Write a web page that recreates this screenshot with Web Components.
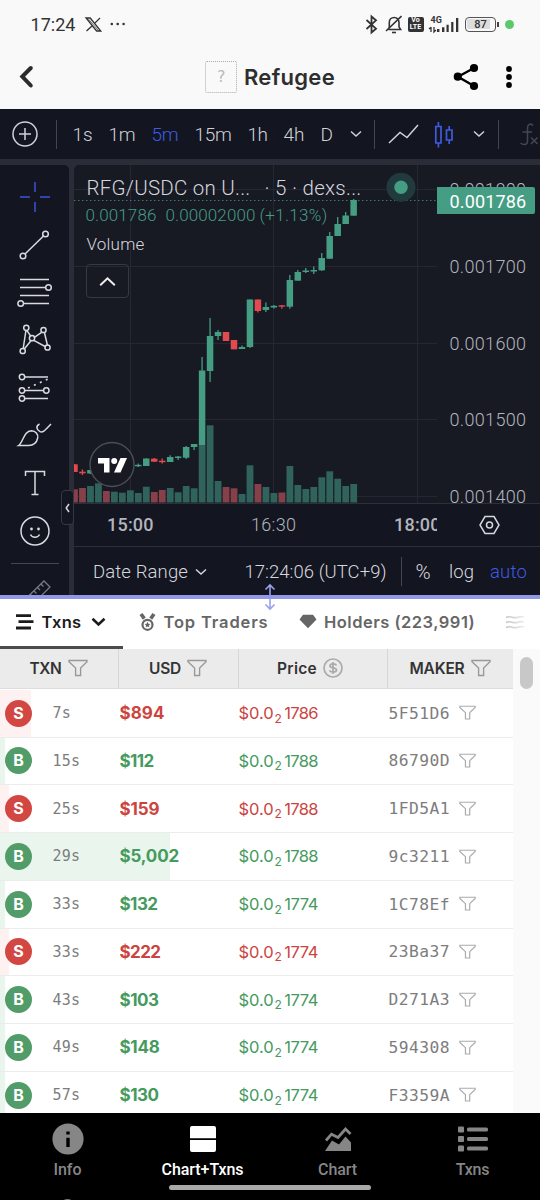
<!DOCTYPE html>
<html lang="en">
<head>
<meta charset="utf-8">
<meta name="viewport" content="width=device-width">
<title>Refugee</title>
<style>
  html, body { margin: 0; height: 100%; overflow: hidden; background: #000; }
  body { font-family: Roboto, "Liberation Sans", sans-serif; }
</style>
</head>
<body>
<token-screen></token-screen>

<script>
// Shared shadow root setup
class BaseElement extends HTMLElement {
  constructor() {
    super();
    this.attachShadow({ mode: "open" });
    this.shadowRoot.innerHTML = `<style>${this.styles()}</style>${this.render()}`;
  }
  styles() { return ":host { display: block; }"; }
  render() { return "<slot></slot>"; }
}

// name: [width, height, markup]
const ICONS = {
  x: [17, 15, `<path d="M1 1H5.2L15.8 14H11.6Z M15 1 9.3 6.6 M7.3 8.8 1.5 14" stroke-width="1.3"/><path d="M3 1.6 13.5 13.6" stroke-width=".7"/>`],
  more: [16, 4, `<g fill="currentColor" stroke="none"><circle cx="1.8" cy="2" r="1.3"/><circle cx="7.7" cy="2" r="1.3"/><circle cx="13.6" cy="2" r="1.3"/></g>`],
  bluetooth: [14, 19, `<path d="M1.5 5 11 13.7 6.5 17.5V1.5L11 5.3 1.5 14" stroke-width="1.8"/>`],
  mute: [18, 19, `<path d="M3.5 14.5H15.6L14 11.8V7.5C14 4.4 12 2.5 9.2 2.5 6.3 2.5 4.3 4.4 4.3 7.5V12L3 14.5 M1 16 16.5 1.2" stroke-width="1.6"/><path d="M7 17.5H11" stroke-width="1.6"/>`],
  signal: [22, 14, `<g fill="currentColor" stroke="none"><path d="M0 11h2.4v3H0zM5 9.2h2.4V14H5zM9.500 6.8h2.200V14H9.500zM14.200 4h2.200v10h-2.200zM19 0h2.300v14H19z"/></g>`],
  arrows: [7, 5, `<path d="M2 0V5M0 2 2 .3M5 0V5L7 3" stroke-width="1.3"/>`],
  back: [16, 24, `<path d="M12.8 3 4.3 11.5 12.8 20.5" stroke-width="4" stroke-linecap="round"/>`],
  share: [26, 28, `<path d="M21 5 5 13.7 21 23" stroke-width="2.4"/><g fill="currentColor" stroke="none"><circle cx="21" cy="5" r="4.1"/><circle cx="4.8" cy="13.7" r="4.1"/><circle cx="21" cy="23" r="4.1"/></g>`],
  kebab: [6, 24, `<g fill="currentColor" stroke="none"><circle cx="3" cy="4" r="2.9"/><circle cx="3" cy="12" r="2.9"/><circle cx="3" cy="20" r="2.9"/></g>`],
  plus: [26, 26, `<circle cx="13" cy="13" r="12"/><path d="M13 7V19M7 13H19"/>`],
  down: [12, 8, `<path d="M1 1.5 6 6 11 1.5" stroke-width="1.5"/>`],
  up: [17, 11, `<path d="M1.2 9.3 8.5 2.3 15.8 9.3" stroke-width="2"/>`],
  line: [31, 22, `<path d="M1 20 12 9.5 19 14.5 30 2"/>`],
  candles: [20, 27, `<path d="M1.8 5.5H7V22H1.8ZM4.4 1V5.5M4.4 22V26.5M12.5 9H18V19H12.5ZM15.2 5V9M15.2 19V23" stroke-width="1.7"/>`],
  fx: [22, 24, `<path d="M14 3.500C11.500 .8 8.500 2.500 8.500 6V19C8.500 23 4.500 23.500 1.500 21M3.500 10H13M12 15.500 18.500 22M18.500 15.500 12 22"/>`],
  cross: [32, 32, `<path d="M16 1V11M16 21V31M1 16H11M21 16H31" stroke-width="1.5"/>`],
  trend: [32, 32, `<path d="M6 25 24.5 7"/><circle cx="4" cy="27" r="2.8"/><circle cx="26.5" cy="5" r="2.8"/>`],
  fib: [36, 32, `<path d="M3 3.5H32M3 11.5H29M3 19.5H32M6.5 27.5H32"/><circle cx="31.5" cy="11.5" r="2.8"/><circle cx="3.7" cy="27.5" r="2.8"/>`],
  pattern: [32, 32, `<path d="M7 6 4.2 24.5M7.8 6.3 12 12.5M5.5 24.8 12.5 16M15 13.7 23 8.2M25.3 8 28.5 21.5M14.8 16.3 27 23"/><circle cx="7.3" cy="3.8" r="2.6"/><circle cx="24.5" cy="6" r="2.6"/><circle cx="13" cy="14.2" r="2.6"/><circle cx="3.7" cy="27" r="2.6"/><circle cx="28.5" cy="23.5" r="2.6"/>`],
  forecast: [32, 32, `<path d="M5.7 5H29M5.7 18.5H24.7M5.7 26.5H29"/><circle cx="3" cy="5" r="2.7"/><circle cx="3" cy="18.5" r="2.7"/><circle cx="27.3" cy="18.5" r="2.7"/><circle cx="3" cy="26.5" r="2.7"/><path d="M9 16 29 7" stroke-dasharray="2 4.5" stroke-width="1.7"/>`],
  brush: [36, 28, `<path d="M1.5 24.5C6.500 21 6.500 10 14.500 9.700 18.500 10 21.500 13 20.700 17 19.500 22.500 16 24.500 11.500 24.500Z M22.500 3C18.500 5 19.500 9 23 10.700 25.500 12 27 10.500 34 3"/>`],
  text: [24, 28, `<path d="M2.500 7V2.500H21.500V7M12 2.500V25.500M8.500 25.500H15.500"/>`],
  smile: [32, 32, `<circle cx="16" cy="16" r="14"/><path d="M11.500 19.500C13 23 19 23 20.500 19.500"/><g fill="currentColor" stroke="none"><circle cx="12.500" cy="14" r="1.400"/><circle cx="19.500" cy="14" r="1.400"/></g>`],
  ruler: [26, 26, `<path d="M1 18.500 18 2 24 8 7 25ZM4.500 15.500 7 18M8 12 10.500 14.500M11.500 8.500 14 11M15 5 17.500 7.500" stroke-width="1.300"/>`],
  gear: [21, 20, `<path d="M6 1.500H15L20 10 15 18.500H6L1 10Z"/><circle cx="10.500" cy="10" r="3"/>`],
  collapse: [5, 10, `<path d="M4 1 1.200 5 4 9"/>`],
  txns: [18, 16, `<path d="M0 1.700H15M2.500 7.700H17.500M0 14H15" stroke-width="2.800"/>`],
  caret: [15, 10, `<path d="M1.500 1.800 7.500 7.500 13.500 1.800" stroke-width="2.600"/>`],
  medal: [17, 18, `<circle cx="8.500" cy="11.800" r="5" stroke-width="2.200"/><path d="M2 1 5.300 5.600M15 1 11.700 5.600" stroke-width="3.600"/><path d="M8.500 8.800l.9 1.900 2 .2-1.400 1.400.3 2-1.800-.9-1.800.9.3-2-1.400-1.400 2-.2z" fill="currentColor" stroke="none"/>`],
  diamond: [18, 15, `<path d="M4 .8H14L17.500 5.500 9 14.300.500 5.500Z" fill="currentColor" stroke="none"/>`],
  waves: [19, 14, `<path d="M0 2.500Q3 1.200 6 2.200T12 2.200 18 2M0 7.500Q3 6.200 6 7.200T12 7.200 18 7M0 12.500Q3 11.200 6 12.200T12 12.200 18 12" stroke-width="1.700"/>`],
  funnel: [20, 18, `<path d="M1 1.500H19V2.800L12.600 9V16.500H7.600V9L1 2.800Z" stroke-width="1.400"/>`],
  dollar: [20, 20, `<circle cx="10" cy="10" r="9" stroke-width="1.700"/><path d="M13.500 7.500C12.500 5.300 7 5.300 7 7.900 7 10.500 13.500 9.300 13.500 12 13.500 14.700 7.500 14.500 6.500 12.300M10 4V16" stroke-width="1.700"/>`],
  resize: [12, 28, `<path d="M6 12V2M1.500 6.500 6 2 10.500 6.500M6 16V26M1.500 21.500 6 26 10.500 21.500" stroke-width="1.600"/>`],
  info: [32, 32, `<circle cx="16" cy="16" r="15.600" fill="currentColor" stroke="none"/><path d="M14.300 14.700H17.700V24H14.300ZM14.300 8.500H17.700V11.500H14.300Z" fill="#000" stroke="none"/>`],
  split: [26, 26, `<path d="M2 0H24Q26 0 26 2V12.300H0V2Q0 0 2 0ZM0 13.900H26V24Q26 26 24 26H2Q0 26 0 24Z" fill="currentColor" stroke="none"/>`],
  area: [26, 26, `<path d="M0 25 7 14.500 14 18.500 20.500 10.500 26 16.500V25Z" fill="currentColor" stroke="none"/><path d="M1 14.500 6.500 8.200 13 11.500 20.500 3 25.500 8" stroke-width="2.800"/>`],
  list: [30, 26, `<g fill="currentColor" stroke="none"><rect width="6" height="6" rx="1" y=".5"/><rect width="6" height="6" rx="1" y="10"/><rect width="6" height="6" rx="1" y="19.500"/><rect x="9" y="1.500" width="21" height="4" rx="1.500"/><rect x="9" y="11" width="21" height="4" rx="1.500"/><rect x="9" y="20.500" width="21" height="4" rx="1.500"/></g>`],
};

class AppIcon extends BaseElement {
  styles() {
    return `:host { display: block; flex: none; line-height: 0; }
      svg { display: block; overflow: visible; fill: none; stroke: currentColor; stroke-width: 1.5; }`;
  }
  render() {
    const [w, h, body] = ICONS[this.getAttribute("name")];
    const scale = Number(this.getAttribute("scale")) || 1;
    return `<svg width="${w * scale}" height="${h * scale}" viewBox="0 0 ${w} ${h}">${body}</svg>`;
  }
}

class StatusBar extends BaseElement {
  styles() {
    return `:host { display: flex; align-items: center; height: 48px; color: #333; box-sizing: border-box; padding: 0 26.5px 0 30.5px; }
      .time { font-size: 18px; }
      .push { margin-left: auto; }
      .volte { width: 16px; height: 15px; margin-left: 5px; border-radius: 2px; background: #333; color: #fff; font: 700 7px/7px Roboto, sans-serif; text-align: center; }
      .net { display: flex; align-items: flex-end; height: 15px; margin-left: 5px; position: relative; }
      .net span { position: absolute; left: 2px; top: -1px; font: 700 9px/9px Roboto, sans-serif; }
      .net app-icon + app-icon { margin-left: 1.5px; }
      .battery { box-sizing: border-box; width: 31px; height: 15px; margin-left: 6px; border: 1.5px solid #555; border-radius: 4px; padding: 1px; }
      .battery b { display: block; height: 10px; font: 500 11px/11px Roboto, sans-serif; text-align: center; border-radius: 2px; background: linear-gradient(90deg, #ddd 87%, transparent 87%); }
      .tip { width: 2px; height: 5px; margin-left: 1px; background: #444; }
      .live { width: 9px; height: 9px; margin-left: 5.5px; border-radius: 50%; background: #5bc96b; }`;
  }
  render() {
    return `<fit-text class="time" width="45">17:24</fit-text>
      <app-icon name="x" style="margin-left:9px"></app-icon>
      <app-icon name="more" style="margin-left:8px"></app-icon>
      <app-icon class="push" name="bluetooth"></app-icon>
      <app-icon name="mute" style="margin-left:6px"></app-icon>
      <div class="volte">Vo<br>LTE</div>
      <div class="net"><span>4G</span><app-icon name="arrows"></app-icon><app-icon name="signal"></app-icon></div>
      <div class="battery"><b>87</b></div><div class="tip"></div><div class="live"></div>`;
  }
}

class TokenHeader extends BaseElement {
  styles() {
    return `:host { display: flex; align-items: center; height: 61px; padding: 0 0 4px 18px; box-sizing: border-box; color: #000; }
      .back { color: #2c2c2c; margin-right: 171px; }
      .logo { box-sizing: border-box; width: 32px; height: 32px; border: 1.5px dotted #aaa; border-radius: 2px; color: #bbb; font: 16px/30px "DejaVu Sans Mono", monospace; text-align: center; }
      .name { margin-left: 7px; font: 600 22px Inter, sans-serif; color: #2e2e2e; }
      .share { margin-left: 117.5px; }
      .menu { margin-left: 27.5px; }`;
  }
  render() {
    return `<app-icon class="back" name="back"></app-icon>
      <div class="logo">?</div><fit-text class="name" width="91">Refugee</fit-text>
      <app-icon class="share" name="share"></app-icon><app-icon class="menu" name="kebab"></app-icon>`;
  }
}

class ChartToolbar extends BaseElement {
  styles() {
    return `:host { display: flex; align-items: center; height: 50px; padding-left: 11.5px; background: #131520; color: #d0d2d9; font-size: 19px; font-weight: 300; overflow: hidden; }
      fit-text { margin-left: 16px; }
      i { flex: none; width: 1px; height: 29px; background: #434651; }
      .on { color: #3f5be0; }
      .fx { color: #444752; margin-left: 20px; }`;
  }
  render() {
    return `<app-icon name="plus"></app-icon><i style="margin-left:18px"></i>
      <fit-text width="20">1s</fit-text><fit-text width="27">1m</fit-text>
      <fit-text class="on" width="27">5m</fit-text><fit-text width="37">15m</fit-text>
      <fit-text width="20">1h</fit-text><fit-text width="21">4h</fit-text><fit-text width="12">D</fit-text>
      <app-icon name="down" style="margin-left:17.500px"></app-icon><i style="margin-left:12px"></i>
      <app-icon name="line" style="margin-left:13px"></app-icon>
      <app-icon class="on" name="candles" style="margin-left:15px"></app-icon>
      <app-icon name="down" style="margin-left:19px"></app-icon><i style="margin-left:13px"></i>
      <app-icon class="fx" name="fx"></app-icon>`;
  }
}

class DrawTools extends BaseElement {
  styles() {
    return `:host { position: relative; display: flex; flex-direction: column; align-items: center; width: 69px; height: 431px; box-sizing: border-box; padding-top: 8px; background: #131520; border-radius: 0 5px 0 0; color: #d8dae0; overflow: hidden; }
      div { flex: none; display: grid; place-items: center; height: 47.7px; }
      .cross { color: #3a55d9; }
      hr { flex: none; width: 48px; height: 1px; margin: 8px 0 15px; border: 0; background: #434651; }
      .ruler { color: #777a84; margin-left: 9px; }`;
  }
  render() {
    const tools = ["cross", "trend", "fib", "pattern", "forecast", "brush", "text", "smile"];
    return tools.map((t) => `<div class="${t}"><app-icon name="${t}"></app-icon></div>`).join("") +
      `<hr><app-icon class="ruler" name="ruler"></app-icon>`;
  }
}

// [colour, body top, body bottom, wick top, wick bottom, volume top]
const CANDLES = [
  ["r", 464.3, 472, 464, 472, 489.3], ["r", 471.7, 473.3, 469.5, 475, 488],
  ["g", 470, 473.5, 470, 474, 486], ["g", 466, 470, 465, 471, 483.3],
  ["r", 466, 469, 465, 470, 491], ["g", 465, 469, 464, 470, 491.7],
  ["g", 464, 467, 463, 468, 492.7], ["g", 464, 467, 463, 468, 490.3],
  ["g", 464.8, 466.3, 463.5, 467, 493], ["g", 458.5, 466, 458.5, 466, 486.7],
  ["r", 458.7, 461.7, 458, 462, 492], ["r", 460.7, 462.2, 458.5, 463.5, 490],
  ["g", 457, 462, 455.3, 462, 488], ["g", 456.5, 458, 456, 460, 492.3],
  ["g", 447, 457.7, 446, 459, 486], ["g", 444, 447, 444, 450, 488.3],
  ["g", 370.5, 445, 357, 445, 445], ["g", 336, 371, 318, 382, 425.3],
  ["g", 332, 336, 330, 340, 481], ["r", 332, 341, 332, 341, 487],
  ["r", 340, 349.3, 340, 349.3, 488.3], ["g", 347, 349, 345.5, 349, 494],
  ["g", 299.5, 347, 299.5, 348, 465.3], ["r", 299.5, 311, 299.5, 312.5, 484],
  ["g", 307, 310, 302.5, 312, 487], ["g", 305.8, 307.5, 305, 308.5, 493],
  ["r", 305.3, 306.7, 305, 308.7, 492.5], ["g", 280, 306.7, 275, 308.7, 466],
  ["g", 272, 280.7, 270, 280.7, 485], ["g", 270.5, 272, 268, 273, 489],
  ["g", 270, 271.5, 266.5, 274, 487], ["g", 258, 270.3, 253, 271, 477.3],
  ["g", 236, 258.7, 232, 259, 471.3], ["g", 224, 236, 217, 236, 478.7],
  ["g", 215.5, 224, 212, 224, 486], ["g", 200, 215.7, 199, 215.7, 484],
];
const FILL = { g: "#459d84", r: "#e24a4f" };
const VOLUME = { g: "#30635c", r: "#86404a" };

class PriceChart extends BaseElement {
  styles() {
    return `:host { position: relative; display: block; height: 382px; background: #171923; border-radius: 5px 0 0 0; overflow: hidden; color: #d5d7de; }
      svg { display: block; font-family: Roboto, sans-serif; }
      .legend { position: absolute; left: 12.5px; top: 12px; display: flex; flex-direction: column; align-items: flex-start; font-weight: 300; }
      .title { display: flex; gap: 14px; font-size: 20.5px; line-height: 22px; }
      .values { display: flex; gap: 9px; margin-left: -1px; font-size: 17px; line-height: 20px; margin-top: 6px; color: #459d84; }
      .values fit-text + fit-text + fit-text { margin-left: -5px; }
      .study { margin-top: 9px; font-size: 17px; line-height: 20px; }
      .toggle { box-sizing: border-box; width: 43px; height: 34px; margin: 10px 0 0 -.5px; display: grid; place-items: center; border: 1.5px solid #363943; border-radius: 4px; color: #eee; }
      .gear { position: absolute; left: 405px; top: 350px; }`;
  }
  render() {
    const candles = CANDLES.map(([c, top, bottom, high, low, vol], i) => {
      const x = 74.4 + i * 7.977;
      return `<rect x="${x - 3.3}" y="${vol}" width="6.8" height="${502.5 - vol}" fill="${VOLUME[c]}"/>
        <rect x="${x - 0.6}" y="${high}" width="1.3" height="${low - high}" fill="${FILL[c]}"/>
        <rect x="${x - 3.2}" y="${top}" width="6.5" height="${bottom - top}" fill="${FILL[c]}"/>`;
    }).join("");
    const label = (y, text) => `<text x="449.5" y="${y}" textLength="76.500">${text}</text>`;
    return `<svg width="466" height="382" viewBox="74 165 466 382">
      <rect x="74" y="503.500" width="466" height="43.500" fill="#131520"/>
      <path d="M130.500 165V503M273.500 165V503M417.500 165V503M74 189.500H437M74 266.500H437M74 343.500H437M74 419.500H437M74 496.500H437" stroke="#252832"/>
      ${candles}
      <path d="M74 503.500H540M74 546.500H540" stroke="#2d303b"/>
      <path d="M74 200.500H437" stroke="#459d84" stroke-dasharray="1.500 2.500" opacity=".75"/>
      <g fill="#b3b5be" font-size="18" font-weight="300">
        ${label(195.5, "0.001800")}${label(273, "0.001700")}${label(350, "0.001600")}${label(426.300, "0.001500")}
        <svg x="437" y="480" width="103" height="23" viewBox="437 480 103 23">${label(503.300, "0.001400")}</svg>
        <svg x="74" y="505" width="363" height="40" viewBox="74 505 363 40">
          <text x="107" y="530.500" textLength="46.500" font-weight="500">15:00</text>
          <text x="251" y="530.500" textLength="45">16:30</text>
          <text x="394" y="530.500" textLength="46.500" font-weight="500">18:00</text>
        </svg>
      </g>
      <path d="M437 187H533Q535 187 535 189V212Q535 214 533 214H437Z" fill="#459d84"/>
      <text x="449.500" y="207.500" textLength="76.500" font-size="18" fill="#fff">0.001786</text>
      <circle cx="401" cy="187.300" r="14.500" fill="#203a3d"/><circle cx="401" cy="187.300" r="6.700" fill="#459d84"/>
      <circle cx="112" cy="464.500" r="22" fill="#171923" stroke="#4a4c55" stroke-width="1.500"/>
      <g fill="#fff"><path d="M98 458H109.500V472.500H104V463.500H98Z"/><circle cx="114.200" cy="461" r="3"/><path d="M120.500 458H127L120.500 472.500H114Z"/></g>
    </svg>
    <div class="legend">
      <div class="title"><fit-text width="164">RFG/USDC on U...</fit-text><fit-text width="97">· 5 · dexs...</fit-text></div>
      <div class="values"><fit-text width="71">0.001786</fit-text><fit-text width="90">0.00002000</fit-text><fit-text width="68">(+1.13%)</fit-text></div>
      <fit-text class="study" width="58">Volume</fit-text>
      <div class="toggle"><app-icon name="up"></app-icon></div>
    </div>
    <app-icon class="gear" name="gear"></app-icon>`;
  }
}

class ChartFooter extends BaseElement {
  styles() {
    return `:host { display: flex; align-items: center; height: 49px; padding-left: 19px; background: #131520; color: #d5d7de; font-size: 18.5px; font-weight: 300; }
      i { width: 1px; height: 29px; margin-left: 14px; background: #434651; }
      .percent { font-size: 20.5px; }
      .auto { color: #3f5be0; }`;
  }
  render() {
    return `<fit-text width="95">Date Range</fit-text><app-icon name="down" style="margin-left:6.500px"></app-icon>
      <fit-text width="142" style="margin-left:38px">17:24:06 (UTC+9)</fit-text><i></i>
      <fit-text class="percent" width="18" style="margin-left:14px">%</fit-text><fit-text width="25" style="margin-left:15.500px">log</fit-text>
      <fit-text class="auto" width="37" style="margin-left:16px">auto</fit-text>`;
  }
}

class PanelTabs extends BaseElement {
  styles() {
    return `:host { display: flex; height: 50px; background: #fff; color: #666; font: 600 16.5px Inter, sans-serif; }
      div { display: flex; align-items: center; box-sizing: border-box; padding-bottom: 5px; }
      .on { width: 123px; padding: 0 0 2px 16px; border-bottom: 3px solid #4c4c4c; color: #1c1c1c; }
      .fade app-icon { -webkit-mask: linear-gradient(90deg, #000, rgba(0, 0, 0, .25)); mask: linear-gradient(90deg, #000, rgba(0, 0, 0, .25)); color: #c4c4c4; }`;
  }
  render() {
    return `<div class="on"><app-icon name="txns"></app-icon><fit-text width="40" style="margin-left:7.500px">Txns</fit-text><app-icon name="caret" style="margin-left:9px"></app-icon></div>
      <div style="margin-left:15.500px"><app-icon name="medal"></app-icon><fit-text width="105" style="margin-left:8px">Top Traders</fit-text></div>
      <div style="margin-left:30.500px"><app-icon name="diamond"></app-icon><fit-text width="151" style="margin-left:7px">Holders (223,991)</fit-text></div>
      <div class="fade" style="margin-left:31px"><app-icon name="waves"></app-icon></div>`;
  }
}

class TxnRow extends BaseElement {
  styles() {
    const sell = this.getAttribute("side") === "S";
    return `:host { display: grid; grid-template-columns: 52.5px 67px 119px 150px 1fr; align-items: center; height: 47.75px; box-sizing: border-box; border-bottom: 1px solid #ececec; color: ${sell ? "#cc4440" : "#459a5d"};
        background: linear-gradient(${sell ? "#fdf1f1, #fdf1f1" : "#eaf6ed, #eaf6ed"}) 0 0 / ${this.getAttribute("bar")}px 100% no-repeat #fff; }
      .side { width: 27px; height: 27px; margin-left: 5px; border-radius: 50%; background: ${sell ? "#d34742" : "#519c69"}; color: #fff; font: 700 16px/27px Inter, sans-serif; text-align: center; }
      .age, .maker { color: #7d7d7d; font: 15px "DejaVu Sans Mono", monospace; }
      .usd { font: 700 17px Inter, sans-serif; }
      .price { display: flex; align-items: baseline; font: 400 16.5px Inter, sans-serif; }
      .price small { font-size: 12px; position: relative; top: 3.5px; margin: 0 2.5px 0 1px; }
      .maker { display: flex; align-items: center; font-size: 16.3px; }
      app-icon { margin-left: 9px; color: #aaa; }`;
  }
  render() {
    const get = (name) => this.getAttribute(name);
    return `<div class="side">${get("side")}</div>
      <fit-text class="age" width="${get("age").length * 9.2}">${get("age")}</fit-text>
      <fit-text class="usd" width="${get("w")}">${get("usd")}</fit-text>
      <div class="price"><fit-text width="35">$0.0</fit-text><small>2</small><fit-text width="33.500">${get("price")}</fit-text></div>
      <div class="maker"><fit-text width="61.5">${get("maker")}</fit-text><app-icon name="funnel" scale=".85"></app-icon></div>`;
  }
}

// side, age, usd, usd width, price digits, maker, bar width
const TXNS = [
  ["S", "7s", "$894", 45, "1786", "5F51D6", 31],
  ["B", "15s", "$112", 34, "1788", "86790D", 5],
  ["S", "25s", "$159", 40, "1788", "1FD5A1", 9],
  ["B", "29s", "$5,002", 59.5, "1788", "9c3211", 170],
  ["B", "33s", "$132", 38, "1774", "1C78Ef", 5],
  ["S", "33s", "$222", 41, "1774", "23Ba37", 9],
  ["B", "43s", "$103", 39, "1774", "D271A3", 5],
  ["B", "49s", "$148", 40, "1774", "594308", 5],
  ["B", "57s", "$130", 39, "1774", "F3359A", 5],
];

class TxnTable extends BaseElement {
  styles() {
    return `:host { display: grid; grid-template-columns: 513px 27px; height: 464px; overflow: hidden; background: #fff; }
      header { display: grid; grid-template-columns: 119px 120px 149px 125px; height: 40px; background: #ebebeb; color: #333; font: 600 15.5px Inter, sans-serif; border-bottom: 1px solid #ddd; box-sizing: border-box; }
      header div { display: flex; align-items: center; justify-content: center; gap: 6px; box-sizing: border-box; border-right: 1px solid #d6d6d6; padding: 0 1px 1px 0; }
      header div:nth-child(3) { padding-right: 6px; }
      header div:last-child { border: 0; }
      header + * { margin-top: .75px; }
      app-icon { color: #999; }
      header div:nth-child(3) app-icon { color: #aaa; }
      aside { background: #fafafa; padding: 8px 7px; }
      aside span { display: block; width: 13px; height: 32px; border-radius: 7px; background: #c8c8c8; }`;
  }
  render() {
    const rows = TXNS.map(([side, age, usd, w, price, maker, bar]) =>
      `<txn-row side="${side}" age="${age}" usd="${usd}" w="${w}" price="${price}" maker="${maker}" bar="${bar}"></txn-row>`).join("");
    return `<section><header>
        <div><fit-text width="32">TXN</fit-text><app-icon name="funnel"></app-icon></div>
        <div><fit-text width="32">USD</fit-text><app-icon name="funnel"></app-icon></div>
        <div><fit-text width="40">Price</fit-text><app-icon name="dollar"></app-icon></div>
        <div><fit-text width="55">MAKER</fit-text><app-icon name="funnel"></app-icon></div>
      </header><div>${rows}</div></section><aside><span></span></aside>`;
  }
}

class NavItem extends BaseElement {
  styles() {
    return `:host { display: flex; flex-direction: column; align-items: center; color: #868686; font: 500 16px/20px Roboto, sans-serif; }
      :host([active]) { color: #fff; }
      div { display: grid; place-items: center; height: 32px; margin: 10px 0 5px; }`;
  }
  render() {
    return `<div><app-icon name="${this.getAttribute("icon")}"></app-icon></div><slot></slot>`;
  }
}

class BottomNav extends BaseElement {
  styles() {
    return `:host { position: relative; display: grid; grid-template-columns: repeat(4, 1fr); height: 87px; background: #000; overflow: hidden; }
      .home { position: absolute; left: 169px; top: 72px; width: 202px; height: 5px; border-radius: 3px; background: #a9a9a9; }
      .peek { position: absolute; left: 60px; top: 85.5px; width: 15px; height: 15px; border-radius: 50%; background: #777; }`;
  }
  render() {
    return `<nav-item icon="info"><fit-text width="28">Info</fit-text></nav-item>
      <nav-item icon="split" active><fit-text width="82">Chart+Txns</fit-text></nav-item>
      <nav-item icon="area"><fit-text width="39">Chart</fit-text></nav-item>
      <nav-item icon="list"><fit-text width="33.500">Txns</fit-text></nav-item>
      <span class="home"></span><span class="peek"></span>`;
  }
}

class TokenScreen extends BaseElement {
  styles() {
    return `:host { display: block; width: 540px; height: 1200px; background: #f9f9f9; overflow: hidden; }
      .chart { position: relative; display: grid; grid-template-columns: 69px 1fr; column-gap: 5px; height: 431px; padding-top: 6px; background: #2a2c37; }
      .handle { position: absolute; left: 61px; top: 331px; width: 11px; height: 33px; display: grid; place-items: center; border: 1px solid #363943; border-radius: 4px; background: #131520; color: #d5d7de; }
      .split { position: relative; height: 4px; margin-top: -1px; background: #9298e8; }
      .split app-icon { position: absolute; left: 264px; top: -12px; color: #98a0ef; }`;
  }
  render() {
    return `<status-bar></status-bar><token-header></token-header>
      <chart-toolbar></chart-toolbar>
      <div class="chart"><draw-tools></draw-tools><div><price-chart></price-chart><chart-footer></chart-footer></div>
        <div class="handle"><app-icon name="collapse"></app-icon></div></div>
      <div class="split"><app-icon name="resize"></app-icon></div>
      <panel-tabs></panel-tabs><txn-table></txn-table><bottom-nav></bottom-nav>`;
  }
}

/**
 * Single line of text tracked out (or in) to a given width.
 * Usage: <fit-text width="60">Label</fit-text>
 */
class FitText extends BaseElement {
  styles() {
    return ":host { display: block; flex: none; white-space: nowrap; } span { display: inline-block; }";
  }
  render() { return "<span><slot></slot></span>"; }
  connectedCallback() {
    const width = Number(this.getAttribute("width"));
    const span = this.shadowRoot.querySelector("span");
    span.style.letterSpacing = "0";
    const natural = span.getBoundingClientRect().width;
    span.style.letterSpacing = `${(width - natural) / this.textContent.length}px`;
    this.style.width = `${width}px`;
  }
}

customElements.define("token-screen", TokenScreen);
customElements.define("status-bar", StatusBar);
customElements.define("token-header", TokenHeader);
customElements.define("chart-toolbar", ChartToolbar);
customElements.define("draw-tools", DrawTools);
customElements.define("price-chart", PriceChart);
customElements.define("chart-footer", ChartFooter);
customElements.define("panel-tabs", PanelTabs);
customElements.define("txn-table", TxnTable);
customElements.define("txn-row", TxnRow);
customElements.define("bottom-nav", BottomNav);
customElements.define("nav-item", NavItem);
customElements.define("app-icon", AppIcon);
// Last, so the surrounding styles are in place when it measures
customElements.define("fit-text", FitText);
</script>
</body>
</html>
